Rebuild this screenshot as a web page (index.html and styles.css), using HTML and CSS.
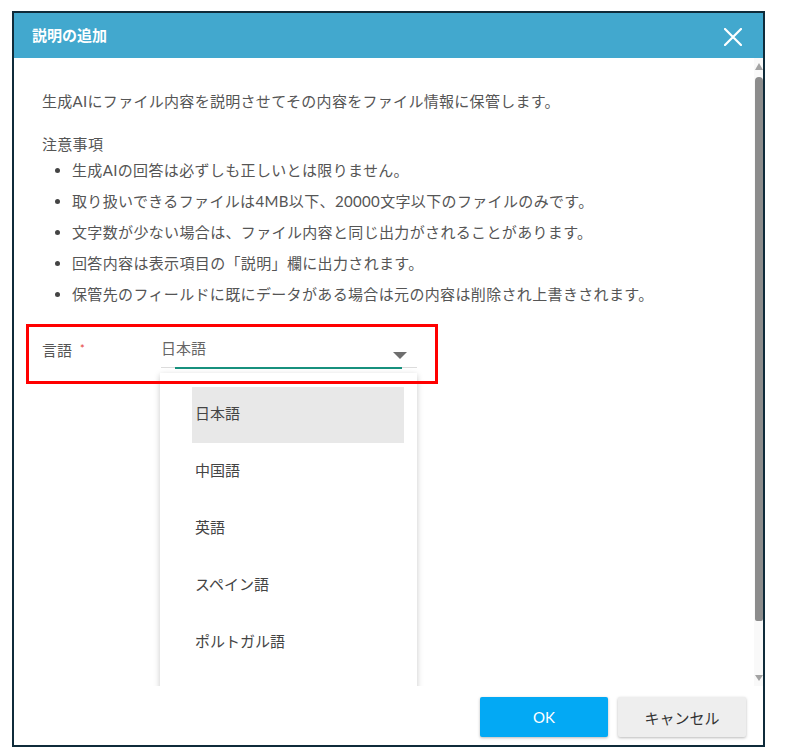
FILE: index.html
```html
<!DOCTYPE html>
<html lang="ja">
<head>
<meta charset="utf-8">
<title>説明の追加</title>
<link rel="stylesheet" href="styles.css">
</head>
<body>
<div class="dialog">
  <div class="header">
    <span class="title">説明の追加</span>
    <svg class="close" width="18" height="18" viewBox="0 0 18 18"><path d="M1 1L17 17M17 1L1 17" stroke="#fff" stroke-width="2.2" stroke-linecap="round" fill="none"/></svg>
  </div>
  <div class="content">
    <div class="main">
      <p class="lead">生成AIにファイル内容を説明させてその内容をファイル情報に保管します。</p>
      <p class="note-title">注意事項</p>
      <ul class="notes">
        <li>生成AIの回答は必ずしも正しいとは限りません。</li>
        <li>取り扱いできるファイルは4MB以下、20000文字以下のファイルのみです。</li>
        <li>文字数が少ない場合は、ファイル内容と同じ出力がされることがあります。</li>
        <li>回答内容は表示項目の「説明」欄に出力されます。</li>
        <li>保管先のフィールドに既にデータがある場合は元の内容は削除され上書きされます。</li>
      </ul>
      <div class="form-row">
        <div class="label">言語<span class="req">*</span></div>
        <div class="select">
          <span class="value">日本語</span>
          <span class="arrow"></span>
          <span class="focus-line"></span>
          <div class="menu">
            <div class="item selected">日本語</div>
            <div class="item">中国語</div>
            <div class="item">英語</div>
            <div class="item">スペイン語</div>
            <div class="item">ポルトガル語</div>
          </div>
        </div>
      </div>
    </div>
    <div class="scrollbar">
      <span class="up"></span>
      <span class="thumb"></span>
      <span class="down"></span>
    </div>
  </div>
  <div class="footer">
    <button class="btn ok">OK</button>
    <button class="btn cancel">キャンセル</button>
  </div>
</div>
</body>
</html>
```
FILE: styles.css
```css
html, body {
  margin: 0;
  padding: 0;
  background: #fff;
}
body {
  font-family: Lato, "Noto Sans CJK JP", sans-serif;
  font-size: 15px;
  color: #555;
}
.dialog {
  margin: 11px 0 0 12px;
  width: 753px;
  height: 736px;
  box-sizing: border-box;
  border: 2px solid #0f2b3a;
  display: flex;
  flex-direction: column;
  background: #fff;
}
.header {
  height: 45px;
  flex: none;
  background: #42a8ce;
  display: flex;
  align-items: center;
  justify-content: space-between;
  padding: 0 21px 0 18px;
}
.title {
  color: #fff;
  font-weight: bold;
  font-size: 15px;
  margin-top: -2px;
}
.close {
  display: block;
  margin-top: 2px;
}
.content {
  flex: 1;
  display: flex;
  overflow: hidden;
  min-height: 0;
}
.main {
  flex: 1;
  padding: 32px 28px 0 28px;
}
.lead, .note-title {
  margin: 0;
  line-height: 22px;
  letter-spacing: 0.3px;
}
.note-title {
  margin-top: 21px;
}
.notes {
  list-style: none;
  margin: 0;
  padding: 0;
}
.notes li {
  position: relative;
  line-height: 31px;
  padding-left: 30px;
  letter-spacing: 0.35px;
}
.notes li::before {
  content: "";
  position: absolute;
  left: 13px;
  top: 13px;
  width: 5px;
  height: 5px;
  border-radius: 50%;
  background: #444;
}
.form-row {
  position: relative;
  margin-top: 14px;
  height: 60px;
  display: flex;
}
.form-row::after {
  content: "";
  position: absolute;
  left: -16px;
  top: 0;
  width: 412px;
  height: 60px;
  box-sizing: border-box;
  border: 3px solid #ff0000;
  z-index: 5;
  pointer-events: none;
}
.label {
  width: 119px;
  padding-top: 14px;
  line-height: 22px;
  color: #555;
}
.req {
  color: #e53935;
  font-size: 11px;
  margin-left: 8px;
  vertical-align: 3px;
}
.select {
  position: relative;
  width: 256px;
  height: 43px;
  border-bottom: 1px solid #dcdcdc;
}
.value {
  display: block;
  padding: 13px 0 0 0;
  line-height: 22px;
  color: #666;
}
.arrow {
  position: absolute;
  left: 232px;
  top: 28px;
  width: 0;
  height: 0;
  border-left: 7px solid transparent;
  border-right: 7px solid transparent;
  border-top: 7px solid #6e6e6e;
}
.focus-line {
  position: absolute;
  left: 14px;
  right: 15px;
  top: 43px;
  height: 2px;
  background: #17917e;
}
.menu {
  position: absolute;
  left: -1px;
  top: 49px;
  width: 257px;
  height: 420px;
  background: #fff;
  box-shadow: 0 2px 6px rgba(0, 0, 0, 0.22);
  padding: 14px 13px 0 32px;
  box-sizing: border-box;
  z-index: 3;
}
.item {
  height: 57px;
  line-height: 52px;
  padding-left: 3px;
  color: #444;
}
.item.selected {
  background: #e8e8e8;
  height: 56px;
  margin-bottom: 1px;
}
.scrollbar {
  width: 9px;
  flex: none;
  background: #f9f9f9;
  display: flex;
  flex-direction: column;
  align-items: flex-end;
  padding: 5px 0;
  box-sizing: border-box;
}
.up {
  width: 0;
  height: 0;
  border-left: 4px solid transparent;
  border-right: 4px solid transparent;
  border-bottom: 7px solid #a3a3a3;
}
.thumb {
  display: block;
  margin-top: 7px;
  width: 8px;
  height: 544px;
  background: #8c8c8c;
  border-radius: 4px 4px 2px 2px;
}
.down {
  margin-top: auto;
  width: 0;
  height: 0;
  border-left: 4px solid transparent;
  border-right: 4px solid transparent;
  border-top: 6px solid #a3a3a3;
}
.footer {
  height: 59px;
  flex: none;
  display: flex;
  justify-content: flex-end;
  gap: 10px;
  padding: 11px 17px 0 0;
  box-sizing: border-box;
}
.btn {
  width: 128px;
  height: 40px;
  border: none;
  border-radius: 2px;
  font-family: Lato, "Noto Sans CJK JP", sans-serif;
  font-size: 15px;
  box-shadow: 0 1px 3px rgba(0, 0, 0, 0.28);
  cursor: pointer;
}
.ok {
  background: #03a9f4;
  color: #fff;
}
.cancel {
  background: #eeeeee;
  color: #333;
}
```
